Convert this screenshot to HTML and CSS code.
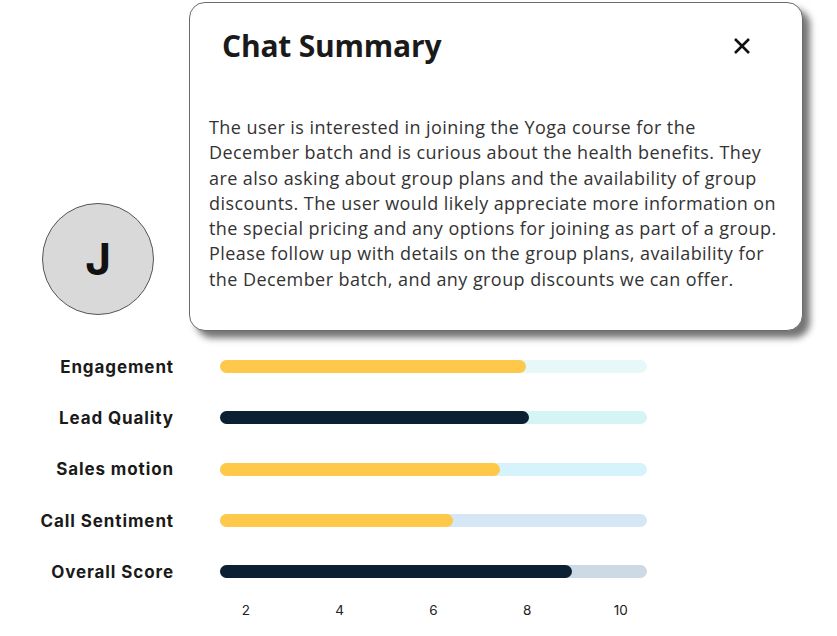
FILE: index.html
```html
<!DOCTYPE html>
<html>
<head>
<meta charset="utf-8">
<link rel="stylesheet" href="styles.css">
</head>
<body>
<div class="page">
  <div class="top">
    <div class="avatar">J</div>
    <div class="modal">
      <div class="modal-head">
        <h1 class="title">Chat Summary</h1>
        <svg class="close" viewBox="0 0 20 20" width="20" height="20"><path d="M3 3 L17 17 M17 3 L3 17" stroke="#111" stroke-width="2.6" stroke-linecap="butt" fill="none"/></svg>
      </div>
      <p class="summary">The user is interested in joining the Yoga course for the<br>December batch and is curious about the health benefits. They<br>are also asking about group plans and the availability of group<br>discounts. The user would likely appreciate more information on<br>the special pricing and any options for joining as part of a group.<br>Please follow up with details on the group plans, availability for<br>the December batch, and any group discounts we can offer.</p>
    </div>
  </div>
  <div class="chart">
    <div class="label">Engagement</div>
    <div class="track t1"><div class="fill yellow" style="width:306px"></div></div>
    <div class="label">Lead Quality</div>
    <div class="track t2"><div class="fill dark" style="width:309px"></div></div>
    <div class="label">Sales motion</div>
    <div class="track t3"><div class="fill yellow" style="width:280px"></div></div>
    <div class="label">Call Sentiment</div>
    <div class="track t4"><div class="fill yellow" style="width:233px"></div></div>
    <div class="label">Overall Score</div>
    <div class="track t5"><div class="fill dark" style="width:352px"></div></div>
    <div class="spacer"></div>
    <div class="axis"><span>2</span><span>4</span><span>6</span><span>8</span><span>10</span></div>
  </div>
</div>
</body>
</html>
```
FILE: styles.css
```css
html, body {
  margin: 0;
  padding: 0;
  background: #ffffff;
}
body {
  width: 837px;
  height: 636px;
  overflow: hidden;
  font-family: "Open Sans", "Liberation Sans", sans-serif;
}
.page {
  padding: 2px 0 0 42px;
}
.top {
  display: flex;
  align-items: flex-start;
}
.avatar {
  width: 110px;
  height: 110px;
  margin-top: 201px;
  margin-right: 35px;
  border: 1px solid #555;
  border-radius: 50%;
  background: #d9d9d9;
  display: flex;
  align-items: center;
  justify-content: center;
  font-family: Inter, "Liberation Sans", sans-serif;
  font-weight: 700;
  font-size: 44px;
  color: #111;
  box-sizing: content-box;
}
.modal {
  width: 614px;
  height: 329px;
  border: 1px solid #6b6b6b;
  border-radius: 16px;
  background: #fff;
  box-shadow: 7px 7px 7px rgba(0, 0, 0, 0.55);
  padding: 0 18px 0 20px;
  box-sizing: border-box;
}
.modal-head {
  display: flex;
  justify-content: space-between;
  align-items: center;
  padding: 23px 32px 0 12px;
}
.title {
  margin: 0;
  font-size: 30px;
  font-weight: 700;
  letter-spacing: -0.2px;
  color: #1a1a1a;
  line-height: 40px;
}
.close {
  display: block;
}
.summary {
  margin: 49px -20px 0 -1px;
  font-size: 18px;
  letter-spacing: 0.43px;
  line-height: 25.3px;
  color: #333;
  white-space: nowrap;
}
.chart {
  display: grid;
  grid-template-columns: 151px 427px;
  column-gap: 47px;
  grid-auto-rows: 51.3px;
  align-items: center;
  margin: 10px 0 0 -20px;
}
.label {
  text-align: right;
  white-space: nowrap;
  font-family: Inter, "Liberation Sans", sans-serif;
  font-weight: 700;
  font-size: 17px;
  letter-spacing: 0.9px;
  color: #1a1a1a;
  margin-right: -1px;
}
.track {
  height: 13px;
  border-radius: 7px;
  display: flex;
}
.t1 { background: #e6f9f8; }
.t2 { background: #d5f5f4; }
.t3 { background: #d6f2fa; }
.t4 { background: #d5e7f4; }
.t5 { background: #cdd9e5; }
.fill {
  height: 13px;
  border-radius: 7px;
}
.yellow { background: #fec84b; }
.dark { background: #0b2032; }
.axis {
  display: grid;
  grid-template-columns: repeat(5, 93.75px);
  margin-left: -21px;
  align-self: start;
  margin-top: 5px;
  font-family: Inter, "Liberation Sans", sans-serif;
  font-size: 13.5px;
  color: #222;
}
.axis span {
  text-align: center;
}
```
